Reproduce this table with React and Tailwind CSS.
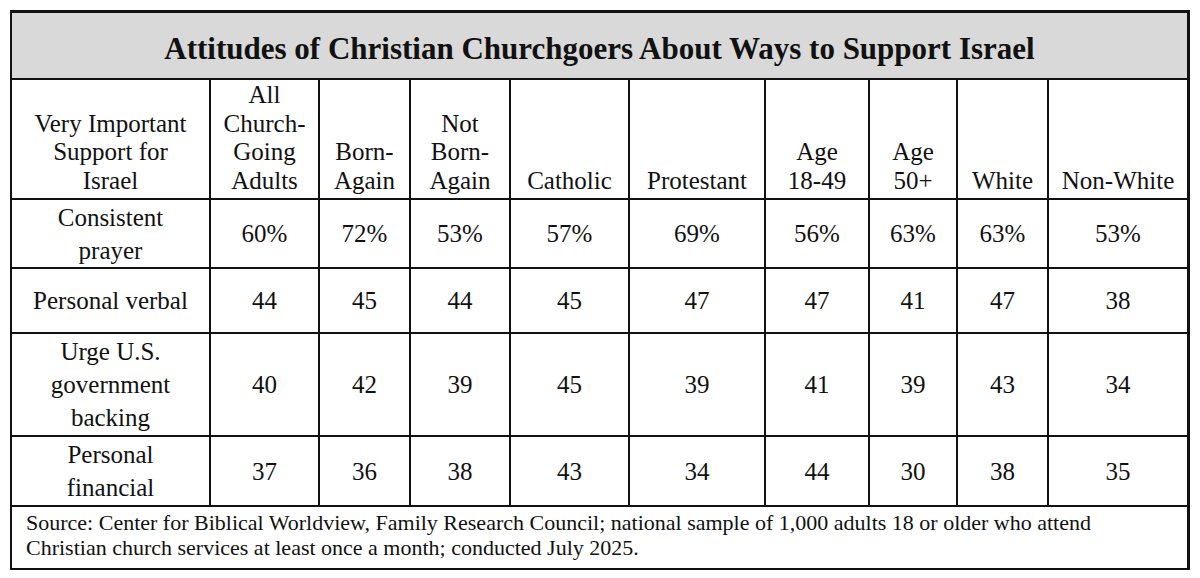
import React from "react";

const cols = ["w-[199px]", "w-[109px]", "w-[91px]", "w-[100px]", "w-[119px]", "w-[136px]", "w-[104px]", "w-[88px]", "w-[91px]", "w-[138px]"];

const header = [
  ["Very Important", "Support for", "Israel"],
  ["All", "Church-", "Going", "Adults"],
  ["Born-", "Again"],
  ["Not", "Born-", "Again"],
  ["Catholic"],
  ["Protestant"],
  ["Age", "18-49"],
  ["Age", "50+"],
  ["White"],
  ["Non-White"],
];

const rows = [
  { h: "h-[69px]", label: ["Consistent", "prayer"], vals: ["60%", "72%", "53%", "57%", "69%", "56%", "63%", "63%", "53%"] },
  { h: "h-[65px]", label: ["Personal verbal"], vals: ["44", "45", "44", "45", "47", "47", "41", "47", "38"] },
  { h: "h-[103px]", label: ["Urge U.S.", "government", "backing"], vals: ["40", "42", "39", "45", "39", "41", "39", "43", "34"] },
  { h: "h-[70px]", label: ["Personal", "financial"], vals: ["37", "36", "38", "43", "34", "44", "30", "38", "35"] },
];

function Cell({ i, h, children, bottom }) {
  return (
    <div
      className={`${cols[i]} ${h} shrink-0 flex flex-col items-center ${bottom ? "justify-end pb-[3px]" : "justify-center"} text-center border-b-2 border-[#111] ${i < 9 ? "border-r-2" : ""}`}
    >
      {children}
    </div>
  );
}

export default function App() {
  return (
    <div className="w-[1200px] h-[578px] bg-white pt-[10px] pl-[10px] text-[#111] font-['Liberation_Serif','Times_New_Roman',serif]">
      <div className="w-[1180px] border-2 border-t-[3px] border-r-[3px] border-[#111]">
        <div className="h-[67px] bg-[#d9d9d9] border-b-2 border-[#111] flex items-center justify-center pt-[5px]">
          <span className="text-[31px] font-bold leading-none">Attitudes of Christian Churchgoers About Ways to Support Israel</span>
        </div>
        <div className="flex">
          {header.map((lines, i) => (
            <Cell key={i} i={i} h="h-[120px]" bottom>
              {lines.map((l, j) => (
                <div key={j} className="text-[25px] leading-[28.5px] whitespace-nowrap">{l}</div>
              ))}
            </Cell>
          ))}
        </div>
        {rows.map((r, ri) => (
          <div key={ri} className="flex">
            <Cell i={0} h={r.h}>
              {r.label.map((l, j) => (
                <div key={j} className="text-[25px] leading-[33px] whitespace-nowrap">{l}</div>
              ))}
            </Cell>
            {r.vals.map((v, vi) => (
              <Cell key={vi} i={vi + 1} h={r.h}>
                <div className="text-[25px] leading-[33px]">{v}</div>
              </Cell>
            ))}
          </div>
        ))}
        <div className="h-[61px] pl-[14px] pt-[3px] text-[22px] leading-[25px]">
          <div>Source: Center for Biblical Worldview, Family Research Council; national sample of 1,000 adults 18 or older who attend</div>
          <div>Christian church services at least once a month; conducted July 2025.</div>
        </div>
      </div>
    </div>
  );
}
